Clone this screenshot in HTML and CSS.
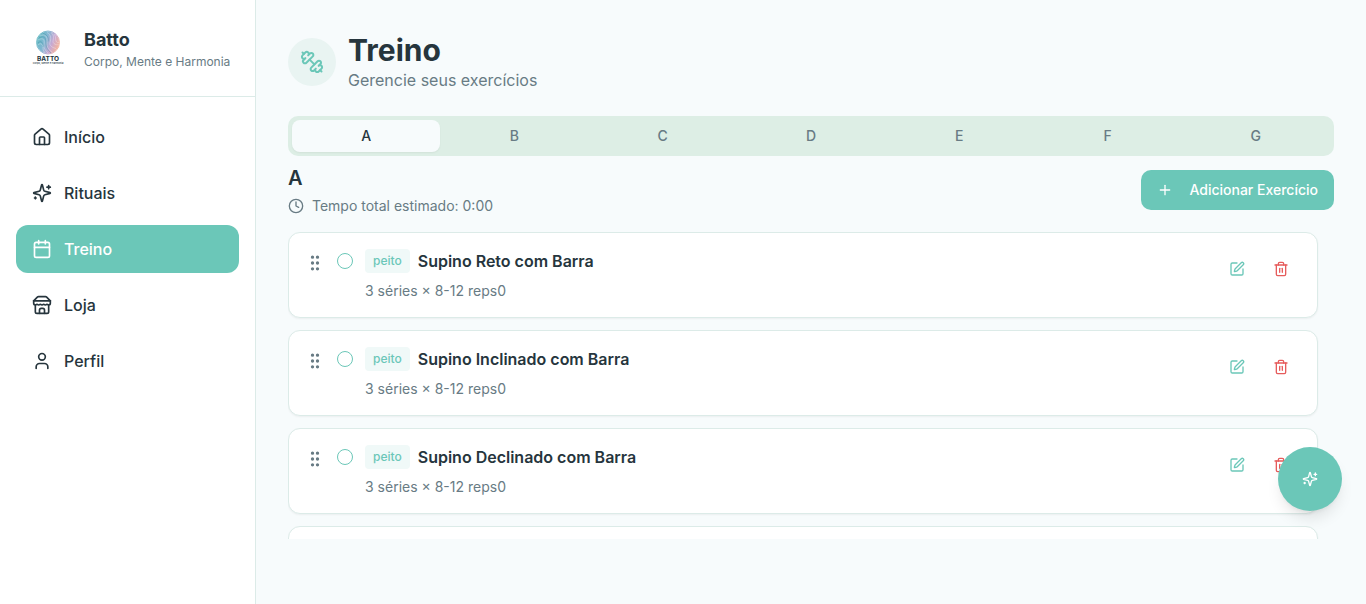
FILE: index.html
```html
<!DOCTYPE html>
<html lang="pt-BR">
<head>
    <meta charset="UTF-8">
    <meta name="viewport" content="width=device-width, initial-scale=1.0">
    <title>Batto - Treino</title>
    <link rel="stylesheet" href="styles.css">
</head>
<body>
    <!-- Ícones reutilizados -->
    <svg class="sprite" aria-hidden="true">
        <symbol id="i-sparkles" viewBox="0 0 24 24">
            <path d="M9.937 15.5A2 2 0 0 0 8.5 14.063l-6.135-1.582a.5.5 0 0 1 0-.962L8.5 9.936A2 2 0 0 0 9.937 8.5l1.582-6.135a.5.5 0 0 1 .963 0L14.063 8.5A2 2 0 0 0 15.5 9.937l6.135 1.581a.5.5 0 0 1 0 .964L15.5 14.063a2 2 0 0 0-1.437 1.437l-1.582 6.135a.5.5 0 0 1-.963 0z"/>
            <path d="M20 3v4M22 5h-4M4 17v2M5 18H3"/>
        </symbol>
        <symbol id="i-grip" viewBox="0 0 24 24">
            <circle cx="9" cy="12" r="1"/><circle cx="9" cy="5" r="1"/><circle cx="9" cy="19" r="1"/>
            <circle cx="15" cy="12" r="1"/><circle cx="15" cy="5" r="1"/><circle cx="15" cy="19" r="1"/>
        </symbol>
        <symbol id="i-edit" viewBox="0 0 24 24">
            <path d="M12 3H5a2 2 0 0 0-2 2v14a2 2 0 0 0 2 2h14a2 2 0 0 0 2-2v-7"/>
            <path d="M18.375 2.625a1 1 0 0 1 3 3l-9.013 9.014a2 2 0 0 1-.853.505l-2.873.84a.5.5 0 0 1-.62-.62l.84-2.873a2 2 0 0 1 .506-.852z"/>
        </symbol>
        <symbol id="i-trash" viewBox="0 0 24 24">
            <path d="M3 6h18"/><path d="M19 6v14c0 1-1 2-2 2H7c-1 0-2-1-2-2V6"/><path d="M8 6V4c0-1 1-2 2-2h4c1 0 2 1 2 2v2"/><path d="M10 11v6"/><path d="M14 11v6"/>
        </symbol>
    </svg>

    <aside class="sidebar">
        <div class="brand">
            <svg class="logo" viewBox="0 0 96 96" role="img" aria-label="Batto">
                <defs>
                    <linearGradient id="logo-cor" x1="0" y1="0.2" x2="1" y2="0.6">
                        <stop offset="0" stop-color="#2fa3ad"/>
                        <stop offset="0.4" stop-color="#5b9fc4"/>
                        <stop offset="0.7" stop-color="#b58cc4"/>
                        <stop offset="1" stop-color="#ee9a7c"/>
                    </linearGradient>
                </defs>
                <circle cx="48" cy="37" r="22" fill="url(#logo-cor)" opacity="0.75"/>
                <circle cx="48" cy="37" r="23" fill="none" stroke="url(#logo-cor)" stroke-width="1.4"/>
                <g fill="none" stroke="#fff" stroke-width="1" opacity="0.6">
                    <path d="M32 24c10-6 16 2 14 12s4 16 10 20M28 32c10-6 14 0 12 8s4 14 8 18M28 42c6-6 10 0 10 6s2 6 4 10"/>
                    <path d="M46 17c9 4 8 14 6 20s4 10 12 12M54 17c8 6 4 14 4 18s6 8 11 6M60 20c5 6 2 10 4 14s4 4 6 2"/>
                </g>
                <g fill="none" stroke="#22818f" stroke-width="1" opacity="0.6">
                    <path d="M30 28c10-6 14 0 14 10s4 14 10 20M28 38c6-6 12 0 10 8M38 19c8 2 12 8 10 16"/>
                </g>
                <text class="logo-name" x="48" y="73" text-anchor="middle">BATTO</text>
                <text class="logo-sub" x="48" y="79" text-anchor="middle">Corpo, Mente e Harmonia</text>
            </svg>
            <div>
                <div class="brand-name">Batto</div>
                <div class="brand-sub">Corpo, Mente e Harmonia</div>
            </div>
        </div>
        <nav class="menu">
            <a href="#inicio">
                <svg class="icon" viewBox="0 0 24 24"><path d="M15 21v-8a1 1 0 0 0-1-1h-4a1 1 0 0 0-1 1v8"/><path d="M3 10a2 2 0 0 1 .709-1.528l7-5.999a2 2 0 0 1 2.582 0l7 5.999A2 2 0 0 1 21 10v9a2 2 0 0 1-2 2H5a2 2 0 0 1-2-2z"/></svg>
                Início
            </a>
            <a href="#rituais">
                <svg class="icon"><use href="#i-sparkles"/></svg>
                Rituais
            </a>
            <a href="#treino" class="active" aria-current="page">
                <svg class="icon" viewBox="0 0 24 24"><path d="M8 2v4M16 2v4M3 10h18"/><rect width="18" height="18" x="3" y="4" rx="2"/></svg>
                Treino
            </a>
            <a href="#loja">
                <svg class="icon" viewBox="0 0 24 24"><path d="m2 7 4.41-4.41A2 2 0 0 1 7.83 2h8.34a2 2 0 0 1 1.42.59L22 7"/><path d="M4 12v8a2 2 0 0 0 2 2h12a2 2 0 0 0 2-2v-8"/><path d="M15 22v-4a2 2 0 0 0-2-2h-2a2 2 0 0 0-2 2v4"/><path d="M2 7h20"/><path d="M22 7v3a2 2 0 0 1-2 2a2.7 2.7 0 0 1-1.59-.63.7.7 0 0 0-.82 0A2.7 2.7 0 0 1 16 12a2.7 2.7 0 0 1-1.59-.63.7.7 0 0 0-.82 0A2.7 2.7 0 0 1 12 12a2.7 2.7 0 0 1-1.59-.63.7.7 0 0 0-.82 0A2.7 2.7 0 0 1 8 12a2.7 2.7 0 0 1-1.59-.63.7.7 0 0 0-.82 0A2.7 2.7 0 0 1 4 12a2 2 0 0 1-2-2V7"/></svg>
                Loja
            </a>
            <a href="#perfil">
                <svg class="icon" viewBox="0 0 24 24"><path d="M19 21v-2a4 4 0 0 0-4-4H9a4 4 0 0 0-4 4v2"/><circle cx="12" cy="7" r="4"/></svg>
                Perfil
            </a>
        </nav>
    </aside>

    <main class="content">
        <header class="page-header">
            <div class="page-icon">
                <svg class="icon icon-lg" viewBox="0 0 24 24"><path d="M14.4 14.4 9.6 9.6"/><path d="M18.657 21.485a2 2 0 1 1-2.829-2.828l-1.767 1.768a2 2 0 1 1-2.829-2.829l6.364-6.364a2 2 0 1 1 2.829 2.829l-1.768 1.767a2 2 0 1 1 2.828 2.829z"/><path d="m21.5 21.5-1.4-1.4M3.9 3.9 2.5 2.5"/><path d="M6.404 12.768a2 2 0 1 1-2.829-2.829l1.768-1.767a2 2 0 1 1-2.828-2.829l2.828-2.828a2 2 0 1 1 2.829 2.828l1.767-1.768a2 2 0 1 1 2.829 2.829z"/></svg>
            </div>
            <div>
                <h1>Treino</h1>
                <p>Gerencie seus exercícios</p>
            </div>
        </header>

        <div class="tabs" role="tablist">
            <button type="button" role="tab" class="tab active" aria-selected="true">A</button>
            <button type="button" role="tab" class="tab">B</button>
            <button type="button" role="tab" class="tab">C</button>
            <button type="button" role="tab" class="tab">D</button>
            <button type="button" role="tab" class="tab">E</button>
            <button type="button" role="tab" class="tab">F</button>
            <button type="button" role="tab" class="tab">G</button>
        </div>

        <div class="section-header">
            <div>
                <h2>A</h2>
                <p class="time">
                    <svg class="icon icon-sm" viewBox="0 0 24 24"><circle cx="12" cy="12" r="10"/><path d="M12 6v6l4 2"/></svg>
                    Tempo total estimado: 0:00
                </p>
            </div>
            <button type="button" class="btn-add">
                <svg class="icon icon-sm" viewBox="0 0 24 24"><path d="M5 12h14"/><path d="M12 5v14"/></svg>
                Adicionar Exercício
            </button>
        </div>

        <div class="list">
            <article class="card">
                <svg class="icon grip"><use href="#i-grip"/></svg>
                <input type="checkbox" class="check" id="ex1">
                <div class="info">
                    <div class="title-row">
                        <span class="tag">peito</span>
                        <label for="ex1">Supino Reto com Barra</label>
                    </div>
                    <p>3 séries × 8-12 reps0</p>
                </div>
                <div class="actions">
                    <button type="button" class="edit" aria-label="Editar"><svg class="icon icon-sm"><use href="#i-edit"/></svg></button>
                    <button type="button" class="delete" aria-label="Excluir"><svg class="icon icon-sm"><use href="#i-trash"/></svg></button>
                </div>
            </article>
            <article class="card">
                <svg class="icon grip"><use href="#i-grip"/></svg>
                <input type="checkbox" class="check" id="ex2">
                <div class="info">
                    <div class="title-row">
                        <span class="tag">peito</span>
                        <label for="ex2">Supino Inclinado com Barra</label>
                    </div>
                    <p>3 séries × 8-12 reps0</p>
                </div>
                <div class="actions">
                    <button type="button" class="edit" aria-label="Editar"><svg class="icon icon-sm"><use href="#i-edit"/></svg></button>
                    <button type="button" class="delete" aria-label="Excluir"><svg class="icon icon-sm"><use href="#i-trash"/></svg></button>
                </div>
            </article>
            <article class="card">
                <svg class="icon grip"><use href="#i-grip"/></svg>
                <input type="checkbox" class="check" id="ex3">
                <div class="info">
                    <div class="title-row">
                        <span class="tag">peito</span>
                        <label for="ex3">Supino Declinado com Barra</label>
                    </div>
                    <p>3 séries × 8-12 reps0</p>
                </div>
                <div class="actions">
                    <button type="button" class="edit" aria-label="Editar"><svg class="icon icon-sm"><use href="#i-edit"/></svg></button>
                    <button type="button" class="delete" aria-label="Excluir"><svg class="icon icon-sm"><use href="#i-trash"/></svg></button>
                </div>
            </article>
            <article class="card"></article>
        </div>
    </main>

    <button type="button" class="fab" aria-label="Assistente">
        <svg class="icon icon-sm"><use href="#i-sparkles"/></svg>
    </button>
</body>
</html>
```
FILE: styles.css
```css
* {
    box-sizing: border-box;
}

body {
    margin: 0;
    height: 100vh;
    display: flex;
    font-family: Inter, "Liberation Sans", sans-serif;
    font-size: 16px;
    line-height: 24px;
    color: #26353d;
    background-color: #f7fbfc;
}

h1, h2, p {
    margin: 0;
}

button {
    font-family: inherit;
    border: none;
    cursor: pointer;
}

.sprite {
    display: none;
}

.icon {
    width: 20px;
    height: 20px;
    flex-shrink: 0;
    fill: none;
    stroke: currentColor;
    stroke-width: 2;
    stroke-linecap: round;
    stroke-linejoin: round;
}

.icon-sm {
    width: 16px;
    height: 16px;
}

.icon-lg {
    width: 24px;
    height: 24px;
}

/* Menu lateral */
.sidebar {
    width: 256px;
    flex-shrink: 0;
    background-color: #fff;
    border-right: 1px solid #dcebe8;
}

.brand {
    display: flex;
    align-items: center;
    gap: 12px;
    padding: 24px;
    height: 97px;
    border-bottom: 1px solid #dcebe8;
    white-space: nowrap;
}

.logo {
    width: 48px;
    height: 48px;
    flex-shrink: 0;
}

.logo-name {
    font-size: 13px;
    font-weight: 700;
    fill: #26353d;
}

.logo-sub {
    font-size: 5px;
    font-weight: 500;
    fill: #26353d;
}

.brand-name {
    font-size: 18px;
    font-weight: 700;
    line-height: 28px;
}

.brand-sub {
    font-size: 12px;
    line-height: 16px;
    color: #687b84;
}

.menu {
    display: flex;
    flex-direction: column;
    gap: 8px;
    padding: 16px;
}

.menu a {
    display: flex;
    align-items: center;
    gap: 12px;
    padding: 12px 16px;
    border-radius: 12px;
    color: #26353d;
    font-weight: 500;
    text-decoration: none;
}

.menu a.active {
    background-color: #6bc7b8;
    color: #fff;
}

/* Conteúdo */
.content {
    flex: 1;
    min-width: 0;
    display: flex;
    flex-direction: column;
    padding: 32px 32px 65px;
}

.page-header {
    display: flex;
    align-items: center;
    gap: 12px;
    margin-bottom: 24px;
}

.page-icon {
    display: flex;
    align-items: center;
    justify-content: center;
    width: 48px;
    height: 48px;
    border-radius: 50%;
    background-color: #e9f4f2;
    color: #6bc7b8;
}

h1 {
    font-size: 30px;
    font-weight: 700;
    line-height: 36px;
}

.page-header p {
    color: #687b84;
}

.tabs {
    display: grid;
    grid-template-columns: repeat(7, 1fr);
    padding: 4px;
    margin-bottom: 8px;
    border-radius: 10px;
    background-color: #ddeee5;
}

.tab {
    height: 32px;
    padding: 0 12px;
    border-radius: 8px;
    background: none;
    color: #687b84;
    font-size: 14px;
    font-weight: 500;
    line-height: 20px;
}

.tab.active {
    background-color: #f7fbfc;
    color: #26353d;
    box-shadow: 0 1px 2px rgba(0, 0, 0, 0.05);
}

.section-header {
    display: flex;
    align-items: center;
    justify-content: space-between;
    margin-bottom: 16px;
}

h2 {
    font-size: 20px;
    font-weight: 600;
    line-height: 28px;
}

.time {
    display: flex;
    align-items: center;
    gap: 8px;
    margin-top: 4px;
    font-size: 14px;
    line-height: 20px;
    color: #687b84;
}

.btn-add {
    display: flex;
    align-items: center;
    gap: 16px;
    height: 40px;
    padding: 0 16px;
    border-radius: 10px;
    background-color: #6bc7b8;
    color: #fff;
    font-size: 14px;
    font-weight: 500;
    line-height: 20px;
}

/* Lista de exercícios */
.list {
    flex: 1;
    min-height: 0;
    display: flex;
    flex-direction: column;
    gap: 12px;
    padding-right: 16px;
    overflow-y: auto;
    scrollbar-width: none;
}

.card {
    display: flex;
    align-items: flex-start;
    flex-shrink: 0;
    gap: 12px;
    min-height: 86px;
    padding: 16px;
    border: 1px solid #dcebe8;
    border-radius: 12px;
    background-color: #fff;
    box-shadow: 0 1px 2px rgba(0, 0, 0, 0.05);
}

.grip {
    margin-top: 4px;
    color: #687b84;
    cursor: grab;
}

.check {
    appearance: none;
    width: 16px;
    height: 16px;
    margin: 4px 0 0;
    flex-shrink: 0;
    border: 1px solid #6bc7b8;
    border-radius: 50%;
}

.check:checked {
    background-color: #6bc7b8;
}

.info {
    flex: 1;
}

.title-row {
    display: flex;
    align-items: center;
    gap: 8px;
    margin-bottom: 8px;
    font-weight: 600;
}

.tag {
    padding: 4px 8px;
    border-radius: 4px;
    background-color: #f0f9f8;
    color: #6bc7b8;
    font-size: 12px;
    font-weight: 500;
    line-height: 16px;
}

.info p {
    font-size: 14px;
    line-height: 20px;
    color: #687b84;
}

.actions {
    display: flex;
    gap: 4px;
}

.actions button {
    display: flex;
    align-items: center;
    justify-content: center;
    width: 40px;
    height: 40px;
    padding: 0;
    background: none;
}

.edit {
    color: #6bc7b8;
}

.delete {
    color: #e65c5c;
}

/* Botão flutuante */
.fab {
    position: fixed;
    right: 24px;
    bottom: 93px;
    display: flex;
    align-items: center;
    justify-content: center;
    width: 64px;
    height: 64px;
    border-radius: 50%;
    background-color: #6bc7b8;
    color: #fff;
    box-shadow: 0 10px 15px -3px rgba(0, 0, 0, 0.1), 0 4px 6px -4px rgba(0, 0, 0, 0.1);
}
```
